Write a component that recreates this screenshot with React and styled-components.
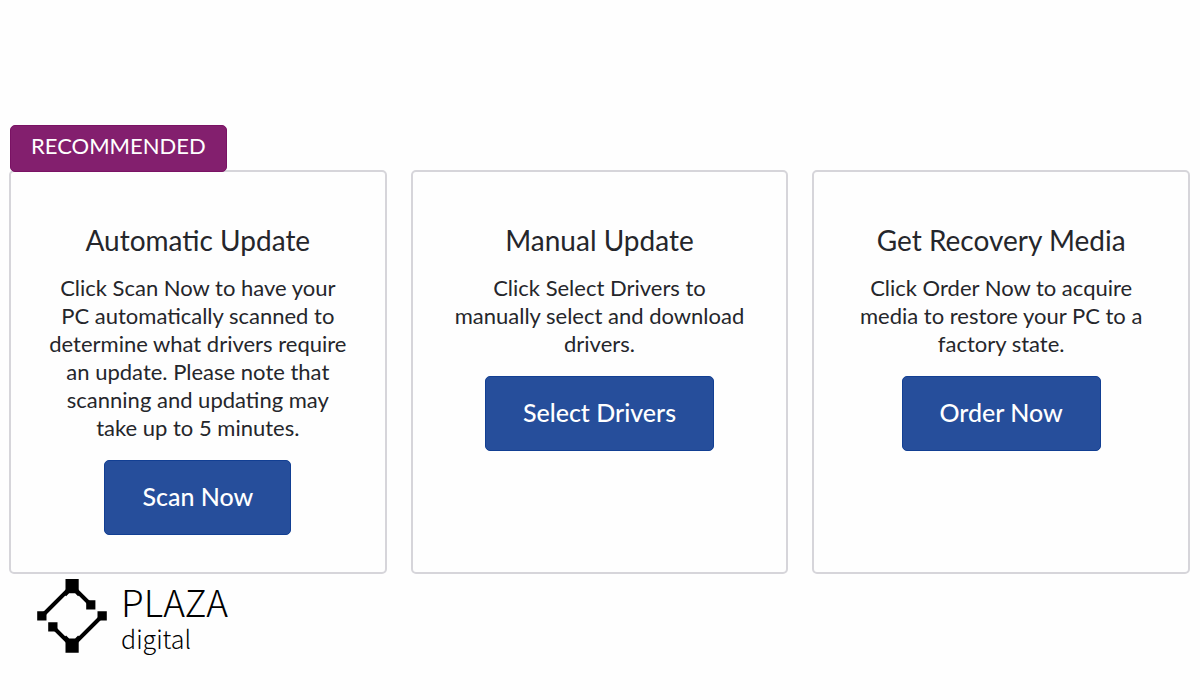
import React from "react";
import styled, { createGlobalStyle } from "styled-components";

const GlobalStyle = createGlobalStyle`
  * {
    box-sizing: border-box;
  }

  body {
    margin: 0;
    background-color: #fefefe;
    color: #25262b;
    font-family: Lato, sans-serif;
  }
`;

const Page = styled.div`
  padding: 170px 10px 0 9px;
`;

const CardGrid = styled.main`
  display: grid;
  grid-template-columns: repeat(3, 1fr);
  gap: 24px;

  @media (max-width: 768px) {
    grid-template-columns: 1fr;
  }
`;

const Card = styled.section`
  position: relative;
  display: flex;
  flex-direction: column;
  align-items: center;
  padding: 51px 38px 37px;
  border: 2px solid #d6d5da;
  border-radius: 5px;
  text-align: center;
`;

const Badge = styled.span`
  position: absolute;
  left: -1px;
  bottom: 100%;
  padding: 6px 20px 11px;
  border: 1px solid #7a1264;
  border-radius: 5px;
  background-color: #831f6e;
  color: #fff;
  font-size: 22px;
  line-height: 28px;
`;

const CardTitle = styled.h2`
  margin: 0 0 17px;
  font-size: 28px;
  font-weight: 400;
  line-height: 34px;
`;

const CardText = styled.p`
  margin: 0 0 18px;
  font-size: 22px;
  line-height: 28px;
`;

const CardButton = styled.button`
  padding: 20px 37px 23px;
  border: 1px solid #123f93;
  border-radius: 5px;
  background-color: #264e9b;
  color: #fff;
  font-family: inherit;
  font-size: 25px;
  font-weight: 500;
  line-height: 30px;
  cursor: pointer;
`;

const Brand = styled.footer`
  display: flex;
  align-items: center;
  gap: 14px;
  padding: 5px 28px;
  color: #000;
`;

const BrandMark = styled.svg`
  width: 70px;
  height: 74px;
`;

const BrandText = styled.div`
  display: flex;
  flex-direction: column;
  font-family: "Noto Sans CJK JP", sans-serif;
  font-weight: 300;
`;

const BrandName = styled.span`
  font-size: 37px;
  line-height: 44px;
`;

const BrandSub = styled.span`
  font-size: 25px;
  line-height: 30px;
`;

const cards = [
  {
    title: "Automatic Update",
    text: "Click Scan Now to have your PC automatically scanned to determine what drivers require an update. Please note that scanning and updating may take up to 5 minutes.",
    button: "Scan Now",
    badge: "RECOMMENDED",
  },
  {
    title: "Manual Update",
    text: "Click Select Drivers to manually select and download drivers.",
    button: "Select Drivers",
  },
  {
    title: "Get Recovery Media",
    text: "Click Order Now to acquire media to restore your PC to a factory state.",
    button: "Order Now",
  },
];

export default function App() {
  return (
    <Page>
      <GlobalStyle />
      <CardGrid>
        {cards.map((card) => (
          <Card key={card.title}>
            {card.badge && <Badge>{card.badge}</Badge>}
            <CardTitle>{card.title}</CardTitle>
            <CardText>{card.text}</CardText>
            <CardButton type="button">{card.button}</CardButton>
          </Card>
        ))}
      </CardGrid>
      <Brand>
        <BrandMark viewBox="0 0 70 74" fill="none" aria-hidden="true">
          <path
            d="M5 37L35 7L54 26M65 37L35 67L16 48"
            stroke="currentColor"
            strokeWidth="4"
          />
          <path
            d="M28.5 0h13.2v12.8l2 2-2.6 2.4-3-3h-6l-3 3-2.6-2.4 2-2zM28.5 73.8h13.2v-12.8l2-2-2.6-2.4-3 3h-6l-3-3-2.6 2.4 2 2z"
            fill="currentColor"
          />
          <path
            d="M0.2 32.2h9.3v9.3h-9.3zM49.2 21.2h9.2v9.2h-9.2zM60.5 32.2h9.3v9.3h-9.3zM11.2 43.2h9.3v9.3h-9.3z"
            fill="currentColor"
          />
        </BrandMark>
        <BrandText>
          <BrandName>PLAZA</BrandName>
          <BrandSub>digital</BrandSub>
        </BrandText>
      </Brand>
    </Page>
  );
}
